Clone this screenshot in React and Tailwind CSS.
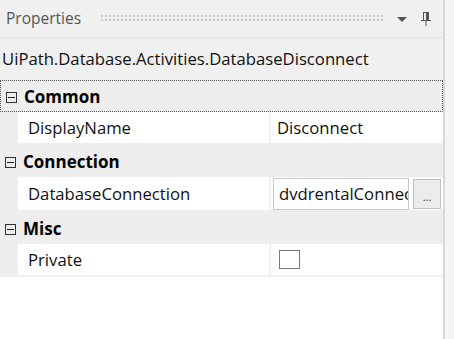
import React from 'react'

const font = { fontFamily: '"Open Sans", "Noto Sans", sans-serif' }

const Category = ({ label, focused }) => (
  <div className={'flex items-center h-[32px] pt-[2px] bg-[#eeeeee] ' + (focused ? 'border border-dotted border-[#555]' : '')}>
    <div className='w-[20px] flex justify-center'>
      <div className='w-[11px] h-[11px] border border-[#333] flex items-center justify-center'>
        <div className='w-[7px] h-px bg-[#222]' />
      </div>
    </div>
    <span className='ml-[3px] text-[17px] font-bold text-black'>{label}</span>
  </div>
)

const Row = ({ name, tall, children }) => (
  <div className={'flex bg-[#eeeeee] ' + (tall ? 'h-[35px]' : 'h-[33px]')}>
    <div className='w-[18px] shrink-0' />
    <div className='flex flex-1 bg-white border-b-2 border-[#eeeeee]'>
      <div className='w-[253px] shrink-0 flex items-center pl-[10px] pt-[1px] border-r-2 border-[#f2f2f2] text-[16.7px] text-[#111]'>{name}</div>
      <div className='flex-1 flex items-center'>{children}</div>
    </div>
  </div>
)

const App = () => {
  return (
    <div style={font} className='w-[454px] h-[339px] flex bg-[#f0f0f0] overflow-hidden'>
      <div className='w-[443px] flex flex-col'>
        <div className='h-[37px] flex items-center pl-[6px] pr-[10px] bg-[#f0f0f0]'>
          <span className='text-[15.5px] text-[#555]'>Properties</span>
          <div className='flex-1 ml-[19px] mr-[8px] h-[9px] bg-[radial-gradient(#c8c8c8_1px,transparent_1px)] bg-[length:4px_4px]' />
          <svg width='14' height='10' viewBox='0 0 14 10' className='ml-[4px]'>
            <path d='M2 3 L12 3 L7 8 Z' fill='#555' />
          </svg>
          <svg width='14' height='18' viewBox='0 0 14 18' className='ml-[10px]'>
            <path d='M4 2 H10 V10 H12 V11 H7.5 V16 H6.5 V11 H2 V10 H4 Z M5 3 V10 H7 V3 Z' fill='#555' />
          </svg>
        </div>
        <div className='flex-1 flex flex-col bg-white border-t border-[#e0e0e0]'>
          <div className='h-[42px] flex items-center pl-[2px] bg-[#f0f0f0] text-[16.7px] text-[#111]'>
            UiPath.Database.Activities.DatabaseDisconnect
          </div>
          <Category label='Common' focused />
          <Row name='DisplayName'>
            <span className='pl-[6px] pt-[1px] text-[16.7px] text-[#111]'>Disconnect</span>
          </Row>
          <Category label='Connection' />
          <Row name='DatabaseConnection' tall>
            <div className='flex items-center gap-[4px] pl-[2px]'>
              <div className='w-[136px] h-[32px] border border-[#c8c8c8] bg-white flex items-center pl-[5px] text-[16.7px] text-[#111]'>
                <span className='block w-full overflow-hidden whitespace-nowrap'>dvdrentalConnection</span>
              </div>
              <div className='w-[28px] h-[30px] border border-[#c0c0c0] bg-[#ececec] flex items-end justify-center pb-[6px] text-[11px] leading-none text-[#333]'>...</div>
            </div>
          </Row>
          <Category label='Misc' />
          <Row name='Private'>
            <div className='ml-[8px] w-[21px] h-[19px] border border-[#777] bg-white' />
          </Row>
          <div className='flex-1 bg-white' />
        </div>
      </div>
      <div className='w-[2px] bg-[#d8d8d8]' />
      <div className='flex-1 bg-[#f5f5f5]' />
    </div>
  )
}

export default App
